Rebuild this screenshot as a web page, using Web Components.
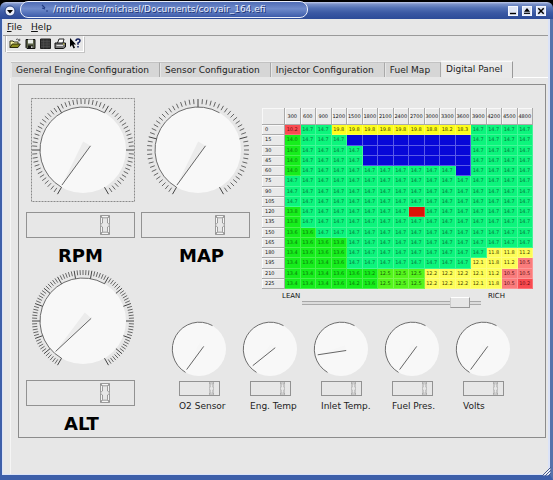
<!DOCTYPE html>
<html lang="en">
<head>
<meta charset="utf-8">
<title>corvair_164.efi</title>
<style>
html { background: #000; }
body { margin: 0; font: 9px/12px "DejaVu Sans", sans-serif; color: #222; }
</style>
</head>
<body>
<efi-window>
  <title-bar slot="title">/mnt/home/michael/Documents/corvair_164.efi</title-bar>
  <menu-bar slot="menu"></menu-bar>
  <tool-bar slot="tools"></tool-bar>
  <tab-strip slot="tabs"></tab-strip>
  <digital-panel></digital-panel>
</efi-window>

<script>
const define = (name, html, setup) => customElements.define(name, class extends HTMLElement {
  constructor() {
    super();
    this.attachShadow({ mode: "open" }).innerHTML = html;
  }
  connectedCallback() {
    if (setup && !this.ready) { this.ready = true; setup(this, this.shadowRoot); }
  }
});

define("efi-window", `
<style>
:host { display: flex; flex-direction: column; box-sizing: border-box; min-height: 100vh; position: relative; background: #e7e7e7; }
.client { flex: 1; display: flex; flex-direction: column; border: solid #3d5fa9; border-width: 0 3px 5px 2px; border-right-color: #5672ab; }
.inner { flex: 1; display: flex; flex-direction: column; border: solid #dbe3f8; border-width: 0 2px 1px 1px; }
.page { margin: 0 0 0 7px; padding: 6px 2px 0 7px; border-left: 1px solid #f5f5f5; flex: 1; }
.grip { position: absolute; right: 2px; bottom: 4px; width: 9px; height: 9px; }
</style>
<slot name="title"></slot>
<div class="client"><div class="inner">
  <slot name="menu"></slot><slot name="tools"></slot><slot name="tabs"></slot>
  <div class="page"><slot></slot></div>
</div></div>
<svg class="grip" viewBox="0 0 9 9"><path d="M0 9L9 0M3 9L9 3M6 9L9 6" stroke="#46598c" stroke-width="1"/><path d="M1.5 9L9 1.5M4.5 9L9 4.5" stroke="#fff" stroke-width=".7"/></svg>`);

define("title-bar", `
<style>
:host { display: flex; height: 19px; box-sizing: border-box; background: #000; }
.bar { flex: 1; display: flex; align-items: center; margin-top: 2px; padding: 0 7px 0 4px; gap: 4px; border-radius: 6px 6px 0 0;
  background: linear-gradient(#c3cdec 0, #7c93ca 2px, #5270b4 6px, #3a58a3 11px, #2c4b98 17px); }
.menu { width: 12px; height: 12px; padding: 0; border: 0; background: none; }
.menu svg, .btn svg { display: block; }
.pill { display: flex; align-items: center; gap: 4px; box-sizing: border-box; width: 288px; height: 17px; margin-top: -3px; padding: 0 0 1px 20px; border: 1px solid #e9eefb; border-radius: 8px;
  background: linear-gradient(#4f6cb5, #6f8bcb 45%, #3c5baa); color: #e6ecfb; white-space: nowrap; text-shadow: 1px 1px #1d3474; }
.space { flex: 1; }
.btn { width: 10px; height: 10px; padding: 0; border: 1px solid #f5f8ff; background: #dfe5f5; }
</style>
<div class="bar">
  <button class="menu" aria-label="Window menu"><svg width="12" height="12" viewBox="0 0 12 12"><circle cx="6" cy="6" r="5" fill="#eef2fc" stroke="#27407f"/><path d="M3 5h6L6 8.5z" fill="#000"/></svg></button>
  <div class="pill"><svg width="8" height="9" viewBox="0 0 8 9"><path d="M1 1l3 3M1 4l3 1M5 7h2" stroke="#243d83" stroke-width="1.2" fill="none"/></svg><slot></slot></div>
  <span class="space"></span>
  <button class="btn" aria-label="Minimize"><svg width="8" height="8" viewBox="0 0 8 8"><path d="M1 6.5h6" stroke="#000" stroke-width="1.4"/></svg></button>
  <button class="btn" aria-label="Maximize"><svg width="8" height="8" viewBox="0 0 8 8"><path d="M1 4.7h6L4 1z" fill="#000"/><path d="M1 6.3h6" stroke="#000" stroke-width="1.2"/></svg></button>
  <button class="btn" aria-label="Close"><svg width="8" height="8" viewBox="0 0 8 8"><path d="M1.3 1.3l5.4 5.4M6.7 1.3L1.3 6.7" stroke="#000" stroke-width="1.5"/></svg></button>
</div>`);

define("menu-bar", `
<style>
:host { display: flex; gap: 9px; height: 16px; padding-left: 4px; align-items: center; border-bottom: 1px solid #9a9a9a; }
button { all: unset; color: #111; }
</style>
<button><u>F</u>ile</button><button><u>H</u>elp</button>`);

define("tool-bar", `
<style>
:host { display: flex; }
.box { display: flex; gap: 3px; margin-left: 3px; padding: 1px 2px; border: solid #fff; border-width: 0 1px 1px; box-shadow: 1px 1px #c4c4c4, -1px 0 #b9b9b9; }
button { all: unset; display: block; width: 12px; height: 13px; }
svg { display: block; }
</style>
<div class="box">
<button aria-label="Open"><svg width="12" height="13" viewBox="0 0 12 13"><path d="M1 10.5V4h3l1 1h4v2" fill="#f5f0a0" stroke="#33331a"/><path d="M1 10.5L3.3 7h8L9 10.5z" fill="#8c8c1e" stroke="#2a2a0c"/><path d="M7 2.5q2-1.2 3 .7M10.7 1.8v2H9" fill="none" stroke="#333" stroke-width=".8"/></svg></button>
<button aria-label="Save"><svg width="12" height="13" viewBox="0 0 12 13"><path d="M2 2.500h9v9H3L2 10.500z" fill="#5b6147" stroke="#111"/><path d="M4 2.500h5v4H4z" fill="#e8ece8"/><path d="M4 8.500h5v3H4z" fill="#111"/><path d="M7.200 9.200h1.300v1.800H7.200z" fill="#eee"/></svg></button>
<button aria-label="Table"><svg width="12" height="13" viewBox="0 0 12 13"><path d="M1.500 2h10v9.500h-10z" fill="#383838" stroke="#202020"/><path d="M2 4.500h9M2 7h9M2 9.500h9M4.500 2.500v9M8 2.500v9" stroke="#555" stroke-width=".5"/></svg></button>
<button aria-label="Print"><svg width="12" height="13" viewBox="0 0 12 13"><path d="M3.500 6L5 2h5L9 6" fill="#fff" stroke="#222"/><path d="M1 6h10.500v4L9.500 11.500H1z" fill="#777" stroke="#111"/><path d="M2.500 8.500h6.500" stroke="#ddd"/><path d="M9 7h1.500" stroke="#e4d84b"/></svg></button>
<button aria-label="What's this?"><svg width="12" height="13" viewBox="0 0 12 13"><path d="M1 1v9l2-2 1.500 3.500 1.500-.7L4.500 7.500H7z" fill="#000"/><path d="M7 4q0-2 2-2t2 1.800q0 1.200-2 2.200v1.800M9 9v1.600" fill="none" stroke="#14205c" stroke-width="1.500"/></svg></button>
</div>`);

define("tab-strip", `
<style>
:host { display: flex; align-items: flex-end; margin: 9px 0 0 8px; height: 17px; }
button { font: inherit; color: #222; text-align: left; white-space: nowrap; box-sizing: border-box; height: 15px; padding: 0 10px 1px 5px; margin: 0 0 1px; border: solid; border-width: 1px 1px 0 0; border-color: #c2c2c2 #a9a9a9; background: #d6d6d6; box-shadow: 0 -1px #efefef, inset 1px 0 #e6e6e6; }
button:first-child { border-left-width: 1px; }
button[aria-selected=true] { height: 17px; margin: 0; padding-bottom: 3px; border-color: #fafafa #999 #fff #fafafa; background: #e9e9e9; }
.line { flex: 1; align-self: flex-end; border-bottom: 1px solid #fff; }
</style>
<button role="tab">General Engine Configuration</button><button role="tab">Sensor Configuration</button><button role="tab">Injector Configuration</button><button role="tab">Fuel Map</button><button role="tab" aria-selected="true">Digital Panel</button><span class="line"></span>`);

/* Round dial. sweep starts 30 degrees left of the bottom and covers 300 degrees. */
define("round-dial", `<style>:host { display: block; } svg { display: block; }</style><div></div>`, (el, root) => {
  const size = +el.getAttribute("size"), major = +el.getAttribute("major"), minor = +el.getAttribute("minor");
  const c = size / 2, r = major ? 43 : c - 1, angle = +el.getAttribute("angle");
  const at = (deg, len) => {
    const a = deg * Math.PI / 180;
    return (c + len * Math.cos(a)).toFixed(2) + " " + (c - len * Math.sin(a)).toFixed(2);
  };
  let ticks = "", majors = "";
  if (major) {
    const n = major * minor;
    for (let i = 0; i <= n; i++) {
      const d = 240 - 300 * i / n;
      if (i % minor === 0) majors += `M${at(d, 43)}L${at(d, 51)}`;
      else ticks += `M${at(d, 46)}L${at(d, 51)}`;
    }
  }
  const tip = at(angle, r - (major ? 2 : 3)), b1 = at(angle - 150, r / 5), b2 = at(angle + 150, r / 5);
  root.querySelector("div").innerHTML = `<svg width="${size}" height="${size}" viewBox="0 0 ${size} ${size}" role="img" aria-label="${el.getAttribute("label")}">
    ${el.hasAttribute("focused") ? `<rect x=".5" y=".5" width="${size - 1}" height="${size - 1}" fill="none" stroke="#8a8a8a" stroke-dasharray="2 1"/>` : ""}
    <circle cx="${c}" cy="${c}" r="${r}" fill="#f8f8f8"/>
    <path d="M${at(240, r)}A${r} ${r} 0 0 1 ${at(60, r)}" fill="none" stroke="#6c6c6c"/>
    <path d="${ticks}" stroke="#666"/><path d="${majors}" stroke="#444"/>
    <path d="M${tip}L${b1}L${b2}z" fill="${major ? "#ececec" : "#f6f6f6"}"/>
    <path d="M${tip}L${at(angle + 150, r / 5)}" stroke="#555" stroke-width=".9"/></svg>`;
});

define("lcd-digit", `
<style>
:host { display: flex; justify-content: flex-end; align-items: center; box-sizing: border-box; border: 1px solid #929292; }
svg { display: block; }
</style>
<svg viewBox="0 0 10 20" role="img" aria-label="0"><g fill="#f4f4f4" stroke="#777" stroke-width=".7">
<path d="M.5 .5h9L7.500 2.800h-5z"/><path d="M.5 1.200v8.300l2-1.500V3.500z"/><path d="M9.500 1.200v8.300l-2-1.500V3.500z"/>
<path d="M.5 10.500v8.300l2-2.300V12z"/><path d="M9.500 10.500v8.300l-2-2.300V12z"/><path d="M.5 19.500h9l-2-2.300h-5z"/></g></svg>`, (el, root) => {
  const svg = root.querySelector("svg"), big = el.hasAttribute("big");
  svg.setAttribute("width", big ? 10 : 5);
  svg.setAttribute("height", big ? 20 : 13);
  svg.setAttribute("preserveAspectRatio", "none");
  svg.style.marginRight = big ? "24px" : "5px";
});

define("big-gauge", `
<style>
:host { display: block; width: 109px; }
round-dial { margin-left: 5px; }
lcd-digit { height: 26px; margin-top: var(--gap, 10px); }
.name { display: block; margin-top: 7px; padding-left: var(--inset, 38px); font-size: 18px; line-height: 22px; font-weight: bold; color: #000; }
</style>
<slot name="dial"></slot><lcd-digit big></lcd-digit><span class="name"><slot></slot></span>`, (el, root) => {
  const d = document.createElement("round-dial");
  for (const a of ["angle", "major", "minor", "focused"]) if (el.hasAttribute(a)) d.setAttribute(a, el.getAttribute(a));
  d.setAttribute("size", 104);
  d.setAttribute("label", el.textContent);
  root.querySelector("slot").replaceWith(d);
});

define("small-gauge", `
<style>
:host { display: block; width: 56px; }
lcd-digit { width: 41px; height: 15px; margin: 4px 0 0 8px; }
.name { display: block; margin: 4px 0 0 8px; white-space: nowrap; }
</style>
<i></i><lcd-digit></lcd-digit><span class="name"><slot></slot></span>`, (el, root) => {
  const d = document.createElement("round-dial");
  d.setAttribute("angle", el.getAttribute("angle"));
  d.setAttribute("size", 56);
  d.setAttribute("label", el.textContent);
  root.querySelector("i").replaceWith(d);
});

define("fuel-table", `
<style>
:host { display: block; }
table { width: 100%; height: 181px; table-layout: fixed; border-collapse: separate; border-spacing: 0; font-size: 5px; line-height: 7px; }
th, td { padding: 0; overflow: hidden; white-space: nowrap; box-sizing: border-box; font-weight: normal; }
th { background: #e9e9e9; border: solid; border-width: 0 1px 1px 0; border-color: #aaa; box-shadow: inset 1px 1px #f8f8f8; color: #111; }
thead th { height: 17px; }
thead th:first-child { width: 23px; }
tbody th { text-align: left; padding-left: 3px; }
td { text-align: center; border: solid rgba(255,255,255,.22); border-width: 0 1px 1px 0; color: #08783c; background: #0cf57c; }
.g { background: #16ee1c; color: #0a7a0a; }
.l { background: #55f51c; color: #175c08; }
.y { background: #fdfd1c; color: #4a4400; }
.p { background: #fdfd58; color: #4a4400; }
.r { background: #f94b50; color: #6d0c10; }
.k { background: #fb7c7c; color: #5c1414; }
.b { background: #0808d8; border-color: #5a5ae8; }
.x { background: #dd1408; }
</style>
<table aria-label="Air fuel ratio"><thead></thead><tbody></tbody></table>`, (el, root) => {
  const A = "14.7", fill = (v, n) => Array(n).fill(v);
  const rows = [
    ["10.2r", A, A, ...fill("19.8y", 6), "18.8y", "18.2y", "18.3y", ...fill(A, 4)],
    ["14.0g", ...fill(A, 3), ...fill("b", 8), ...fill(A, 4)],
    ["14.0g", ...fill(A, 4), ...fill("b", 7), ...fill(A, 4)],
    ["14.0g", ...fill(A, 4), ...fill("b", 7), ...fill(A, 4)],
    ["14.0g", ...fill(A, 10), "b", ...fill(A, 4)],
    fill(A, 16), fill(A, 16), fill(A, 16),
    ["13.8g", ...fill(A, 7), "x", ...fill(A, 7)],
    ["13.8g", ...fill(A, 15)],
    ["13.6g", "13.6g", ...fill(A, 14)],
    ["13.4g", "13.6g", "13.6g", "13.8g", ...fill(A, 12)],
    ["13.4g", "13.6g", "13.6g", "13.6g", ...fill(A, 9), "11.8p", "11.8p", "11.2p"],
    ["13.4g", "13.6g", "13.4g", "13.6g", ...fill(A, 8), "12.1p", "11.8p", "11.2p", "10.5k"],
    ["13.4g", "13.4g", "13.4g", "13.6g", "13.6g", "13.2g", "12.5l", "12.5l", "12.5l", "12.2p", "12.2p", "12.2p", "12.1p", "11.2p", "10.5k", "10.5k"],
    ["13.4g", "13.4g", "13.4g", "13.6g", "14.2g", "13.6g", "12.5l", "12.5l", "12.5l", "12.2p", "12.2p", "12.2p", "12.1p", "11.8p", "10.5k", "10.2r"]
  ];
  root.querySelector("thead").innerHTML = "<tr><th></th>" + rows.map((_, i) => `<th scope="col">${300 * (i + 1)}</th>`).join("") + "</tr>";
  root.querySelector("tbody").innerHTML = rows.map((row, i) =>
    `<tr><th scope="row">${15 * i}</th>` + row.map(v => `<td class="${v.replace(/[\d.]/g, "")}">${v.replace(/[a-z]/g, "")}</td>`).join("") + "</tr>").join("");
});

define("mixture-slider", `
<style>
:host { display: flex; padding: 2px 28px 0 20px; font-size: 7px; line-height: 10px; color: #111; }
input { appearance: none; flex: 1; min-width: 0; height: 11px; margin: 6px 7px 0 2px; background: linear-gradient(#a8a8a8, #a8a8a8) 0 4px / 100% 1px no-repeat, linear-gradient(#dcdcdc, #dcdcdc) 0 5px / 100% 2px no-repeat, linear-gradient(#aaa, #aaa) 0 7px / 100% 1px no-repeat; }
input::-webkit-slider-thumb { appearance: none; width: 20px; height: 11px; border: 1px solid; border-color: #fff #999 #999 #ccc; background: #e6e6e6; box-sizing: border-box; }
</style>
<label for="mix">LEAN</label><input id="mix" type="range" min="0" max="100" value="93"><span>RICH</span>`);

define("digital-panel", `
<style>
:host { display: flex; gap: 6px; border: 1px solid #8c8c8c; padding: 13px 12px 2px 7px; }
.left { display: flex; flex-direction: column; gap: 2px; }
.right { flex: 1; display: flex; flex-direction: column; min-width: 0; }
.top { display: flex; gap: 12px; }
.map { flex: 1; min-width: 0; padding-top: 10px; }
.bottom { display: flex; justify-content: space-between; padding: 13px 22px 0 30px; }
.rpm { --inset: 32px; }
.alt { --gap: 7px; }
</style>
<div class="left">
  <big-gauge class="rpm" angle="239" major="5" minor="13" focused>RPM</big-gauge>
  <big-gauge class="alt" angle="228" major="15" minor="6">ALT</big-gauge>
</div>
<div class="right">
  <div class="top">
    <big-gauge angle="239" major="4" minor="15">MAP</big-gauge>
    <div class="map"><fuel-table></fuel-table><mixture-slider></mixture-slider></div>
  </div>
  <div class="bottom">
    <small-gauge angle="239">O2 Sensor</small-gauge>
    <small-gauge angle="224">Eng. Temp</small-gauge>
    <small-gauge angle="194">Inlet Temp.</small-gauge>
    <small-gauge angle="239">Fuel Pres.</small-gauge>
    <small-gauge angle="239">Volts</small-gauge>
  </div>
</div>`);
</script>
</body>
</html>
